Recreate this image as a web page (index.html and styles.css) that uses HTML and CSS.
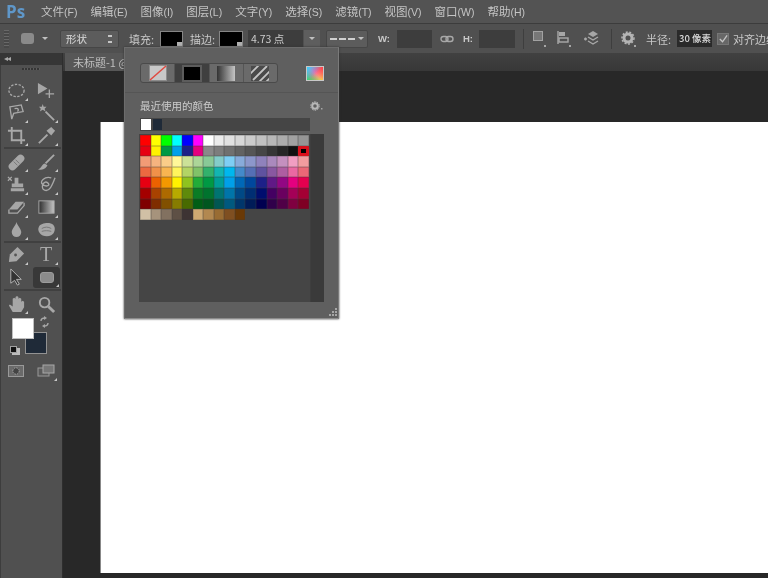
FILE: index.html
```html
<!DOCTYPE html>
<html lang="zh">
<head>
<meta charset="utf-8">
<title>Photoshop</title>
<link rel="stylesheet" href="styles.css">
</head>
<body>
<div class="app">
  <header class="menubar">
    <span class="logo">Ps</span>
    <nav class="menu">
      <span>文件<small>(F)</small></span><span>编辑<small>(E)</small></span><span>图像<small>(I)</small></span><span>图层<small>(L)</small></span><span>文字<small>(Y)</small></span><span>选择<small>(S)</small></span><span>滤镜<small>(T)</small></span><span>视图<small>(V)</small></span><span>窗口<small>(W)</small></span><span>帮助<small>(H)</small></span>
    </nav>
  </header>

  <div class="options">
    <span class="grip"></span>
    <span class="shape-ic m12"></span>
    <span class="caret m8"></span>
    <span class="select m12 w59"><b>形状</b><i class="updown"></i></span>
    <span class="label m10 w27">填充:</span>
    <span class="swatch m4 w23"></span>
    <span class="label m7 w27">描边:</span>
    <span class="swatch m2 w24"></span>
    <span class="field m5 w55">4.73 点</span>
    <span class="btn m1 w16"><i class="caret"></i></span>
    <span class="select dash-select m6 w42"><em class="dash"></em><i class="caret"></i></span>
    <span class="label bold m10 w12">W:</span>
    <span class="field m7 w35"></span>
    <svg class="m8" width="14" height="10" viewBox="0 0 14 10"><rect class="ic" x="1" y="2.500" width="7" height="5" rx="2.500"/><rect class="ic" x="6" y="2.500" width="7" height="5" rx="2.500"/></svg>
    <span class="label bold m9 w12">H:</span>
    <span class="field m4 w36"></span>
    <span class="sep m8"></span>
    <svg class="m9" width="14" height="18" viewBox="0 0 14 18"><rect x="0.500" y="1.500" width="9" height="9" fill="#777" stroke="#a2a2a2"/><rect class="f" x="11" y="15" width="2" height="2"/></svg>
    <svg class="m10" width="14" height="18" viewBox="0 0 14 18"><path class="ic" d="M1 1v13"/><rect class="f" x="2" y="2" width="6" height="4"/><rect class="ic" x="2" y="8" width="9" height="4"/><rect class="f" x="12" y="15" width="2" height="2"/></svg>
    <svg class="m13" width="16" height="18" viewBox="0 0 16 18"><path class="f" d="M9 1l5 3-5 3-5-3z"/><path class="ic" d="M4 7l5 3 5-3M4 11l5 3 5-3M0 9h3M1.500 7.500v3"/></svg>
    <span class="sep m11"></span>
    <svg class="m9" width="15" height="18" viewBox="0 0 15 18"><circle cx="7" cy="8" r="4" fill="none" stroke="#b4b4b4" stroke-width="3"/><circle cx="7" cy="8" r="6" fill="none" stroke="#b4b4b4" stroke-width="1.500" stroke-dasharray="2 1.600"/><rect class="f" x="13" y="15" width="2" height="2"/></svg>
    <span class="label m10 w25">半径:</span>
    <span class="radius m6">30 像素</span>
    <span class="check m5"><svg width="11" height="11" viewBox="0 0 11 11"><path d="M2 5l3 3 5-7" fill="none" stroke="#c4c4c4" stroke-width="1.500"/></svg></span>
    <span class="label m4 nowrap">对齐边缘</span>
  </div>

  <div class="main">
    <aside class="toolbar">
      <div class="collapse">◂◂</div>
      <div class="tools">
        <div class="handle"></div>
        <div class="tool-grid g1">
          <span class="tool more"><svg viewBox="0 0 20 20"><ellipse class="ic dashed" cx="10" cy="10" rx="8" ry="6.500"/></svg></span>
          <span class="tool"><svg viewBox="0 0 20 20"><path class="f" d="M1 2l10 6-10 6z"/><path class="ic" d="M13 9v9M9 13.500h9"/></svg></span>
          <span class="tool more"><svg viewBox="0 0 20 20"><path class="ic" d="M3 4l12-2 2 7-10 2-2 6z"/><path class="ic" d="M8 6c4-1 5 1 3 3"/></svg></span>
          <span class="tool more"><svg viewBox="0 0 20 20"><path class="ic thick" d="M9 9l9 9"/><path class="f" d="M6 1l1 3 3 0-2 2 1 3-3-2-3 2 1-3-2-2 3 0z"/></svg></span>
          <span class="tool more"><svg viewBox="0 0 20 20"><path class="ic thick" d="M5 1v14h14M1 5h14v14"/></svg></span>
          <span class="tool more"><svg viewBox="0 0 20 20"><path class="ic thick" d="M2 18l9-9"/><path class="f" d="M10 5l5-4 4 4-4 5z"/></svg></span>
        </div>
        <div class="divider"></div>
        <div class="tool-grid g2">
          <span class="tool more"><svg viewBox="0 0 20 20"><rect class="f" x="0" y="6" width="20" height="8" rx="4" transform="rotate(-45 10 10)"/><path d="M7 9l4 4M9 7l4 4" stroke="#777"/></svg></span>
          <span class="tool more"><svg viewBox="0 0 20 20"><path class="ic thick" d="M9 11l9-9"/><path class="f" d="M1 17c3 0 4-5 7-6l3 2c-1 3-5 6-10 4z"/></svg></span>
          <span class="tool more"><svg viewBox="0 0 20 20"><path class="f" d="M8 3h4v6h5v4H5V9h3zM4 14h14v3H4z"/><path class="ic" d="M1 2l4 4M5 2L1 6"/></svg></span>
          <span class="tool more"><svg viewBox="0 0 20 20"><path class="ic" d="M15 3C8 1 2 7 6 10s9 1 5-2-8 6-3 8 8-5 11-13"/></svg></span>
          <span class="tool more"><svg viewBox="0 0 20 20"><path class="f" d="M2 12l7-8h9l-7 8z"/><path class="ic" d="M2 12v4h9l7-8v-3"/></svg></span>
          <span class="tool more"><svg viewBox="0 0 20 20"><defs><linearGradient id="gr"><stop offset="0" stop-color="#2e2e2e"/><stop offset="1" stop-color="#c4c4c4"/></linearGradient></defs><rect x="2" y="3" width="16" height="13" fill="url(#gr)" stroke="#a8a8a8"/></svg></span>
          <span class="tool more"><svg viewBox="0 0 20 20"><path class="f" d="M10 2c1 4 5 7 5 11a5 5 0 0 1-10 0c0-4 4-7 5-11z"/></svg></span>
          <span class="tool more"><svg viewBox="0 0 20 20"><path class="f" d="M2 7c2-4 12-5 15-2s2 9-2 11-10 1-12-2-2-5-1-7z"/><path d="M5 9c3-2 7-2 10 0M5 12c3-1 7-1 10 0" fill="none" stroke="#757575"/></svg></span>
        </div>
        <div class="divider d2"></div>
        <div class="tool-grid g3">
          <span class="tool more"><svg viewBox="0 0 20 20"><path class="f" d="M2 18l1-8 8-8 7 7-8 8z"/><circle cx="9" cy="10.500" r="1.500" fill="#555"/></svg></span>
          <span class="tool more type">T</span>
          <span class="tool"><svg viewBox="0 0 20 20"><path d="M4 1v15l4-3 3 5 2-1-3-5h5z" fill="#333" stroke="#b4b4b4"/></svg></span>
          <span class="tool more active"><span class="rrect"></span></span>
        </div>
        <div class="divider d3"></div>
        <div class="tool-grid g4">
          <span class="tool more"><svg viewBox="0 0 20 20"><path class="f" d="M6 18L2 11l1-1 3 2V4l1.500-1L9 4V2l1.500-1L12 2v2l1.500-1L15 4v3l1.500-1L18 7v6l-3 5z"/></svg></span>
          <span class="tool"><svg viewBox="0 0 20 20"><circle class="ic thick" cx="8" cy="8" r="5"/><path class="ic wide" d="M12 12l6 6"/></svg></span>
        </div>
        <div class="colors">
          <span class="bg-color"></span>
          <span class="fg-color"></span>
          <svg class="swap" width="12" height="12" viewBox="0 0 12 12"><path class="ic" d="M2 5c0-2 2-3 4-3M9 7c0 2-2 3-4 3"/><path class="f" d="M5 0l3 2-3 2zM6 8l-3 2 3 2z"/></svg>
          <span class="def-bg"></span>
          <span class="def-fg"></span>
        </div>
        <div class="mode-row">
          <svg width="16" height="13" viewBox="0 0 16 13"><rect x="0.500" y="0.500" width="15" height="11" fill="#6a6a6a" stroke="#999"/><circle cx="8" cy="6" r="3.200" fill="#444" stroke="#aaa" stroke-dasharray="1.500 1"/></svg>
          <span class="tool more screen"><svg viewBox="0 0 18 14"><rect x="1" y="4" width="11" height="8" fill="#5a5a5a" stroke="#999"/><rect x="6" y="1" width="11" height="8" fill="#777" stroke="#a8a8a8"/></svg></span>
        </div>
      </div>
    </aside>

    <section class="workspace">
      <div class="tabstrip"><span class="doc-tab">未标题-1 @ 100%</span></div>
      <div class="pasteboard"><div class="page"></div></div>
    </section>
  </div>

  <div class="popup">
    <div class="popup-top">
      <div class="segments">
        <span class="seg"><svg width="18" height="16" viewBox="0 0 18 16"><rect x="0.500" y="0.500" width="17" height="15" fill="#c8c8c8" stroke="#8c8c8c"/><path d="M1 15L17 1" stroke="#e0483f" stroke-width="1.500"/></svg></span>
        <span class="seg on"><span class="solid"></span></span>
        <span class="seg"><span class="grad"></span></span>
        <span class="seg"><svg width="18" height="15" viewBox="0 0 18 15"><rect width="18" height="15" fill="#4a4a4a"/><path d="M-2 9L8-1M2 14L16 0M8 16L20 4M14 17L21 10" stroke="#c4c4c4" stroke-width="1.800"/></svg></span>
      </div>
      <span class="picker"></span>
    </div>
    <div class="popup-line"></div>
    <div class="recent-head">
      <span>最近使用的颜色</span>
      <svg class="head-gear" width="13" height="10" viewBox="0 0 13 10"><circle cx="5" cy="5" r="2.800" fill="none" stroke="#b8b8b8" stroke-width="2"/><circle cx="5" cy="5" r="4.300" fill="none" stroke="#b8b8b8" stroke-dasharray="1.500 1.200"/><rect class="f" x="11" y="7" width="1.500" height="1.500"/></svg>
    </div>
    <div class="recent"><span class="r-white"></span><span class="r-navy"></span></div>
    <div class="panel">
      <div class="grid">
        <span style="background:#ff0000"></span><span style="background:#ffff00"></span><span style="background:#00ff00"></span><span style="background:#00ffff"></span><span style="background:#0000ff"></span><span style="background:#ff00ff"></span><span style="background:#ffffff"></span><span style="background:#ebebeb"></span><span style="background:#e1e1e1"></span><span style="background:#d7d7d7"></span><span style="background:#cbcbcb"></span><span style="background:#c1c1c1"></span><span style="background:#b7b7b7"></span><span style="background:#acacac"></span><span style="background:#a1a1a1"></span><span style="background:#959595"></span>
        <span style="background:#e60012"></span><span style="background:#fff100"></span><span style="background:#009944"></span><span style="background:#00a0e9"></span><span style="background:#1d2088"></span><span style="background:#e4007f"></span><span style="background:#898989"></span><span style="background:#7d7d7d"></span><span style="background:#707070"></span><span style="background:#626262"></span><span style="background:#555555"></span><span style="background:#464646"></span><span style="background:#363636"></span><span style="background:#262626"></span><span style="background:#111111"></span><span class="sel"></span>
        <span style="background:#f29b76"></span><span style="background:#f6b37f"></span><span style="background:#facd89"></span><span style="background:#fff799"></span><span style="background:#cce198"></span><span style="background:#acd598"></span><span style="background:#89c997"></span><span style="background:#84ccc9"></span><span style="background:#7ecef4"></span><span style="background:#88abda"></span><span style="background:#8c97cb"></span><span style="background:#8f82bc"></span><span style="background:#aa89bd"></span><span style="background:#c490bf"></span><span style="background:#f19ec2"></span><span style="background:#f29c9f"></span>
        <span style="background:#ec6941"></span><span style="background:#f19149"></span><span style="background:#f8b551"></span><span style="background:#fff45c"></span><span style="background:#b3d465"></span><span style="background:#80c269"></span><span style="background:#32b16c"></span><span style="background:#13b5b1"></span><span style="background:#00b7ee"></span><span style="background:#448aca"></span><span style="background:#556fb5"></span><span style="background:#5f52a0"></span><span style="background:#8957a1"></span><span style="background:#ae5da1"></span><span style="background:#ea68a2"></span><span style="background:#eb6877"></span>
        <span style="background:#e60012"></span><span style="background:#eb6100"></span><span style="background:#f39800"></span><span style="background:#fff100"></span><span style="background:#8fc31f"></span><span style="background:#22ac38"></span><span style="background:#009944"></span><span style="background:#009e96"></span><span style="background:#00a0e9"></span><span style="background:#0068b7"></span><span style="background:#00479d"></span><span style="background:#1d2088"></span><span style="background:#601986"></span><span style="background:#920783"></span><span style="background:#e4007f"></span><span style="background:#e5004f"></span>
        <span style="background:#a40000"></span><span style="background:#a84200"></span><span style="background:#ad6a00"></span><span style="background:#b7aa00"></span><span style="background:#5f8a0b"></span><span style="background:#097c25"></span><span style="background:#00732e"></span><span style="background:#007471"></span><span style="background:#0075a9"></span><span style="background:#004986"></span><span style="background:#002e73"></span><span style="background:#000d6e"></span><span style="background:#440062"></span><span style="background:#6a005f"></span><span style="background:#a40057"></span><span style="background:#a40034"></span>
        <span style="background:#7f0000"></span><span style="background:#7f2d00"></span><span style="background:#815000"></span><span style="background:#867c00"></span><span style="background:#486a00"></span><span style="background:#005e15"></span><span style="background:#00561f"></span><span style="background:#005752"></span><span style="background:#00597f"></span><span style="background:#00366b"></span><span style="background:#001c58"></span><span style="background:#000050"></span><span style="background:#30004a"></span><span style="background:#500047"></span><span style="background:#7f0040"></span><span style="background:#7f0024"></span>
        <span style="background:#d1c0a5"></span><span style="background:#a6937c"></span><span style="background:#827160"></span><span style="background:#5e5045"></span><span style="background:#3d3333"></span><span style="background:#cfa972"></span><span style="background:#b28850"></span><span style="background:#996c33"></span><span style="background:#7f4f21"></span><span style="background:#6a3906"></span>
      </div>
      <div class="scroll"></div>
    </div>
    <svg class="resize" width="9" height="9" viewBox="0 0 9 9"><path class="f" d="M7 0h2v2H7zM4 3h2v2H4zM7 3h2v2H7zM1 6h2v2H1zM4 6h2v2H4zM7 6h2v2H7z"/></svg>
  </div>
</div>
</body>
</html>
```

FILE: styles.css
```css
* { box-sizing: border-box; }
html, body { margin: 0; padding: 0; background: #282828; }
.app {
  position: relative;
  width: 768px;
  height: 578px;
  overflow: hidden;
  display: flex;
  flex-direction: column;
  font-family: "Noto Sans CJK SC", "Liberation Sans", sans-serif;
  color: #c6c6c6;
  background: #282828;
  filter: blur(0.6px);
}

/* menu bar */
.menubar {
  height: 24px;
  flex: none;
  display: flex;
  align-items: center;
  background: #535353;
  border-bottom: 1px solid #3c3c3c;
}
.logo {
  width: 41px;
  padding-left: 6px;
  font: bold 17px/23px "Open Sans", "Liberation Sans", sans-serif;
  color: #5f97c9;
}
.menu { display: flex; gap: 13px; font-size: 11.500px; line-height: 23px; color: #c4c4c4; }
.menu span { display: flex; align-items: baseline; white-space: nowrap; }
.menu small { font: 10.500px "Liberation Sans", sans-serif; }

/* options bar */
.options {
  height: 29px;
  flex: none;
  display: flex;
  align-items: center;
  padding-left: 4px;
  background: #505050;
  font-size: 10px;
}
.options > * { flex: none; }
.grip {
  width: 5px;
  height: 18px;
  background: repeating-linear-gradient(#686868 0 1px, #484848 1px 3px);
}
.shape-ic { width: 13px; height: 11px; border-radius: 3px; background: #8a8a8a; }
.caret {
  display: inline-block;
  width: 0;
  height: 0;
  border-left: 3px solid transparent;
  border-right: 3px solid transparent;
  border-top: 3px solid #c0c0c0;
}
.select {
  height: 18px;
  display: flex;
  align-items: center;
  justify-content: space-between;
  padding: 0 6px 0 5px;
  background: #5c5c5c;
  border: 1px solid #464646;
  border-radius: 2px;
}
.dash-select { padding: 0 3px 0 3px; }
.select b { font-weight: 500; font-size: 10.500px; }
.updown { width: 4px; height: 8px; border-top: 2px solid #c4c4c4; border-bottom: 2px solid #c4c4c4; }
.label { font-size: 11px; line-height: 14px; color: #c8c8c8; white-space: nowrap; }
.bold { font: bold 9.500px "Liberation Sans", sans-serif; }
.nowrap { white-space: nowrap; }
.swatch {
  position: relative;
  height: 16px;
  background: #000;
  border: 1px solid #858585;
}
.swatch::after {
  content: "";
  position: absolute;
  right: 0;
  bottom: 0;
  width: 5px;
  height: 4px;
  background: #b0b0b0;
}
.field {
  height: 18px;
  padding-left: 3px;
  background: #3d3d3d;
  font: 10.500px/18px "Noto Sans CJK SC", sans-serif;
  color: #cccccc;
}
.btn {
  height: 18px;
  display: flex;
  align-items: center;
  justify-content: center;
  background: #5e5e5e;
}
.dash {
  width: 27px;
  height: 2px;
  background: repeating-linear-gradient(90deg, #d0d0d0 0 7px, transparent 7px 9px);
}
.sep { width: 1px; height: 20px; background: #3e3e3e; }
.radius {
  width: 35px;
  height: 17px;
  overflow: hidden;
  padding-left: 2px;
  background: #2a2a2a;
  font: 500 9.500px/17px "Noto Sans CJK SC", sans-serif;
  color: #d8d8d8;
  white-space: nowrap;
}
.check { width: 12px; height: 12px; display: flex; background: #676767; border: 1px solid #767676; }

.m1 { margin-left: 1px; } .m2 { margin-left: 2px; } .m4 { margin-left: 4px; }
.m5 { margin-left: 5px; } .m6 { margin-left: 6px; } .m7 { margin-left: 7px; }
.m8 { margin-left: 8px; } .m9 { margin-left: 9px; } .m10 { margin-left: 10px; }
.m11 { margin-left: 11px; } .m12 { margin-left: 12px; } .m13 { margin-left: 13px; }
.w12 { width: 12px; } .w16 { width: 16px; } .w23 { width: 23px; } .w24 { width: 24px; }
.w25 { width: 25px; } .w27 { width: 27px; } .w35 { width: 35px; } .w36 { width: 36px; }
.w42 { width: 42px; } .w55 { width: 55px; } .w59 { width: 59px; }

/* svg helpers */
.ic { fill: none; stroke: #a8a8a8; stroke-width: 1.400; }
.thick { stroke-width: 2; }
.wide { stroke-width: 3; }
.dashed { stroke-dasharray: 2.500 1.500; }
.f { fill: #a6a6a6; stroke: none; }

/* layout below the bars */
.main { flex: 1; display: flex; min-height: 0; }
.toolbar {
  width: 63px;
  flex: none;
  display: flex;
  flex-direction: column;
  background: #3d3d3d;
  border-right: 1px solid #2e2e2e;
}
.collapse {
  height: 12px;
  padding-left: 4px;
  background: #363636;
  font: 8px/12px "DejaVu Sans", sans-serif;
  letter-spacing: -1px;
  color: #a8a8a8;
}
.tools { flex: 1; margin-left: 1px; background: #505050; }
.handle {
  width: 18px;
  height: 2px;
  margin: 3px 0 0 21px;
  background: repeating-linear-gradient(90deg, #353535 0 2px, #5c5c5c 2px 3px);
}
.tool-grid { display: grid; grid-template-columns: 30px 30px; grid-auto-rows: 22.600px; }
.g1 { margin-top: 9px; }
.g2 { margin-top: 2px; }
.g4 { margin-top: 1.500px; }
.tool {
  position: relative;
  display: flex;
  align-items: center;
  justify-content: center;
}
.tool svg { width: 19px; height: 19px; }
.more::after {
  content: "";
  position: absolute;
  right: 3px;
  bottom: 1px;
  width: 0;
  height: 0;
  border-left: 3px solid transparent;
  border-bottom: 3px solid #c8c8c8;
}
.type { font: 20px/23px "Liberation Serif", serif; color: #a8a8a8; }
.active { background: #383838; border-radius: 3px; height: 21px; margin: 1px 1px 0 2px; }
.active.more::after { right: 1px; }
.rrect { width: 14px; height: 11px; border-radius: 3px; background: #8c8c8c; border: 1px solid #9c9c9c; }
.divider { height: 2px; margin: 0 1px 0 3px; background: #404040; }
.d3 { margin-top: 1px; }

.colors { position: relative; height: 37px; margin-top: 3px; }
.bg-color {
  position: absolute;
  left: 24px;
  top: 14px;
  width: 22px;
  height: 22px;
  background: #1f2a38;
  border: 1px solid #929292;
}
.fg-color {
  position: absolute;
  left: 11px;
  top: 0;
  width: 22px;
  height: 21px;
  background: #fff;
  border: 1px solid #c0c0c0;
}
.swap { position: absolute; left: 38px; top: -2px; }
.def-bg { position: absolute; left: 11px; top: 30px; width: 8px; height: 7px; background: #bcbcbc; }
.def-fg { position: absolute; left: 9px; top: 28px; width: 7px; height: 7px; background: #111; border: 1px solid #a0a0a0; }

.mode-row { display: flex; align-items: center; gap: 13px; margin: 9px 0 0 7px; }
.mode-row svg { flex: none; }
.screen { width: 18px; height: 14px; }
.screen svg { width: 18px; height: 14px; }
.screen.more::after { right: -2px; bottom: -3px; }

/* workspace */
.workspace { flex: 1; display: flex; flex-direction: column; min-width: 0; }
.tabstrip {
  height: 18px;
  flex: none;
  padding-left: 2px;
  background: linear-gradient(#414141, #383838);
  overflow: hidden;
}
.doc-tab {
  display: block;
  width: 80px;
  height: 18px;
  padding-left: 8px;
  background: #575757;
  font-size: 11px;
  line-height: 18px;
  white-space: nowrap;
  color: #bdbdbd;
}
.pasteboard {
  flex: 1;
  padding: 51px 0 5px 37px;
  background: #282828;
}
.page { height: 100%; background: #fff; border-left: 1px solid #888; }

/* popup */
.popup {
  position: absolute;
  left: 124px;
  top: 47px;
  width: 215px;
  height: 272px;
  padding: 15px 15px 0;
  background: #5f5f5f;
  border: 1px solid #6c6c6c;
  border-bottom-color: #8c8c8c;
  border-right-color: #7a7a7a;
  box-shadow: 0 0 2px #333;
}
.popup-top { display: flex; align-items: center; justify-content: space-between; height: 20px; }
.segments {
  display: flex;
  width: 138px;
  height: 20px;
  border: 1px solid #4a4a4a;
  border-radius: 3px;
  background: #6a6a6a;
}
.seg {
  flex: 1;
  display: flex;
  align-items: center;
  justify-content: center;
  border-right: 1px solid #555;
}
.seg:last-child { border-right: 0; }
.seg.on { background: #3f3f3f; }
.solid { width: 16px; height: 13px; background: #000; outline: 2px solid #5c5c5c; }
.grad { width: 18px; height: 15px; background: linear-gradient(90deg, #333, #c4c4c4); }
.picker {
  width: 18px;
  height: 15px;
  margin-right: -1px;
  border: 1px solid #c8c8c8;
  background:
    linear-gradient(135deg, #2fd3ff 0, rgba(255,255,255,0) 55%),
    linear-gradient(45deg, #2fdc5a 0, rgba(255,255,255,0) 55%),
    linear-gradient(225deg, #ff4040 0, rgba(255,255,255,0) 55%),
    linear-gradient(315deg, #ffe040 0, #ff60c0 60%);
}
.popup-line { height: 1px; margin: 9px -15px 0; background: #555; }
.recent-head {
  display: flex;
  align-items: center;
  justify-content: space-between;
  height: 16px;
  margin-top: 5px;
  font-size: 10.500px;
  line-height: 16px;
  color: #cccccc;
}
.head-gear { margin-right: 0; }
.recent {
  display: flex;
  gap: 2px;
  width: 170px;
  height: 13px;
  margin-top: 4px;
  padding: 1px;
  background: #454545;
}
.r-white { width: 10px; background: #fff; }
.r-navy { width: 9px; background: #1f2a38; }
.panel {
  display: flex;
  height: 168px;
  margin: 3px -1px 0 -1px;
  background: #454545;
}
.grid {
  width: 171px;
  height: 100%;
  padding: 1px 0 0 1px;
  display: grid;
  grid-template-columns: repeat(16, 10.560px);
  grid-auto-rows: 10.600px;
  align-content: start;
}
.grid span { box-shadow: inset 0 0 0 .5px rgba(60,60,60,.45); }
.grid .sel { background: #000; border: 3px solid #d8101c; box-shadow: none; border-radius: 1px; }
.scroll { flex: 1; background: #3a3a3a; border-left: 1px solid #3e3e3e; }
.resize { position: absolute; right: 1px; bottom: 1px; }
```
